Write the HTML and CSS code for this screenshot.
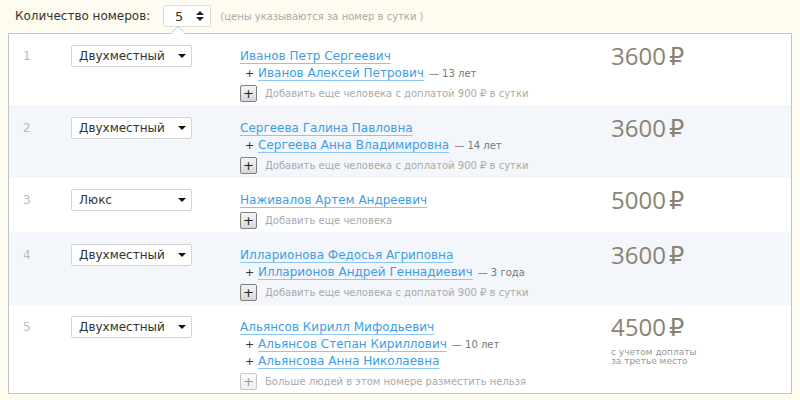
FILE: index.html
```html
<!DOCTYPE html>
<html lang="ru">
<head>
<meta charset="utf-8">
<title>Номера</title>
<link rel="stylesheet" href="styles.css">
</head>
<body>
<div class="page">
  <div class="head">
    <span class="label">Количество номеров:</span>
    <div class="spin"><span class="spin-val">5</span><span class="spin-arrows"><i class="up"></i><i class="down"></i></span></div>
    <span class="note">(цены указываются за номер в сутки )</span>
  </div>
  <div class="box">
    <div class="row">
      <div class="num">1</div>
      <div class="cell-sel"><div class="select"><span>Двухместный</span><i class="caret"></i></div></div>
      <div class="people">
        <div class="main"><a class="link">Иванов Петр Сергеевич</a></div>
        <div class="sub"><span class="plus">+</span><a class="link">Иванов Алексей Петрович</a><span class="age">— 13 лет</span></div>
        <div class="add"><span class="btn">+</span><span class="add-text">Добавить еще человека с доплатой 900 ₽ в сутки</span></div>
      </div>
      <div class="price"><div class="sum">3600<span class="rub">₽</span></div></div>
    </div>
    <div class="row alt">
      <div class="num">2</div>
      <div class="cell-sel"><div class="select"><span>Двухместный</span><i class="caret"></i></div></div>
      <div class="people">
        <div class="main"><a class="link">Сергеева Галина Павловна</a></div>
        <div class="sub"><span class="plus">+</span><a class="link">Сергеева Анна Владимировна</a><span class="age">— 14 лет</span></div>
        <div class="add"><span class="btn">+</span><span class="add-text">Добавить еще человека с доплатой 900 ₽ в сутки</span></div>
      </div>
      <div class="price"><div class="sum">3600<span class="rub">₽</span></div></div>
    </div>
    <div class="row">
      <div class="num">3</div>
      <div class="cell-sel"><div class="select"><span>Люкс</span><i class="caret"></i></div></div>
      <div class="people">
        <div class="main"><a class="link">Наживалов Артем Андреевич</a></div>
        <div class="add"><span class="btn">+</span><span class="add-text">Добавить еще человека</span></div>
      </div>
      <div class="price"><div class="sum">5000<span class="rub">₽</span></div></div>
    </div>
    <div class="row alt">
      <div class="num">4</div>
      <div class="cell-sel"><div class="select"><span>Двухместный</span><i class="caret"></i></div></div>
      <div class="people">
        <div class="main"><a class="link">Илларионова Федосья Агриповна</a></div>
        <div class="sub"><span class="plus">+</span><a class="link">Илларионов Андрей Геннадиевич</a><span class="age">— 3 года</span></div>
        <div class="add"><span class="btn">+</span><span class="add-text">Добавить еще человека с доплатой 900 ₽ в сутки</span></div>
      </div>
      <div class="price"><div class="sum">3600<span class="rub">₽</span></div></div>
    </div>
    <div class="row">
      <div class="num">5</div>
      <div class="cell-sel"><div class="select"><span>Двухместный</span><i class="caret"></i></div></div>
      <div class="people">
        <div class="main"><a class="link">Альянсов Кирилл Мифодьевич</a></div>
        <div class="sub"><span class="plus">+</span><a class="link">Альянсов Степан Кириллович</a><span class="age">— 10 лет</span></div>
        <div class="sub"><span class="plus">+</span><a class="link">Альянсова Анна Николаевна</a></div>
        <div class="add"><span class="btn disabled">+</span><span class="add-text">Больше людей в этом номере разместить нельзя</span></div>
      </div>
      <div class="price"><div class="sum">4500<span class="rub">₽</span></div><div class="extra">с учетом доплаты<br>за третье место</div></div>
    </div>
  </div>
</div>
</body>
</html>
```

FILE: styles.css
```css
html, body {
  margin: 0;
  padding: 0;
  background: #fefbf0;
}
body {
  font-family: "DejaVu Sans", Verdana, sans-serif;
  font-size: 12px;
  color: #333;
}
.page {
  padding: 5px 8px 0 8px;
}
.head {
  display: flex;
  align-items: center;
  height: 22px;
  padding-left: 7px;
}
.label {
  color: #333;
  font-size: 12px;
  margin-right: 13px;
}
.spin {
  box-sizing: border-box;
  width: 48px;
  height: 22px;
  background: #fff;
  border: 1px solid #ddd;
  border-radius: 2px;
  display: flex;
  align-items: center;
  justify-content: flex-end;
  padding-right: 6px;
  gap: 13px;
}
.spin-val {
  font-size: 13px;
  color: #333;
}
.spin-arrows {
  display: flex;
  flex-direction: column;
  gap: 2px;
}
.spin-arrows i {
  display: block;
  width: 0;
  height: 0;
  border-left: 4px solid transparent;
  border-right: 4px solid transparent;
}
.spin-arrows .up { border-bottom: 4px solid #222; }
.spin-arrows .down { border-top: 4px solid #222; }
.note {
  margin-left: 9px;
  font-size: 10px;
  color: #aaa;
}
.box {
  position: relative;
  margin-top: 6px;
  background: #fff;
  border: 1px solid #c4c4c4;
}
.box::before,
.box::after {
  content: "";
  position: absolute;
  left: 161px;
  width: 0;
  height: 0;
  border-left: 8px solid transparent;
  border-right: 8px solid transparent;
}
.box::before {
  top: -8px;
  border-bottom: 8px solid #c4c4c4;
}
.box::after {
  top: -7px;
  border-bottom: 8px solid #fff;
}
.row {
  display: grid;
  grid-template-columns: 48px 169px 371px 1fr;
  padding: 13px 0 3px 14px;
}
.row.alt {
  background: #f3f6fa;
  padding-top: 14px;
  padding-bottom: 4px;
}
.num {
  color: #bbb;
  font-size: 12px;
  line-height: 18px;
}
.select {
  box-sizing: border-box;
  width: 121px;
  height: 22px;
  margin-top: -2px;
  background: #fff;
  border: 1px solid #d4d4d4;
  border-radius: 2px;
  display: flex;
  align-items: center;
  justify-content: space-between;
  padding: 0 5px 0 7px;
  font-size: 12px;
  color: #333;
}
.caret {
  display: block;
  width: 0;
  height: 0;
  border-left: 4px solid transparent;
  border-right: 4px solid transparent;
  border-top: 4px solid #111;
}
.people {
  display: flex;
  flex-direction: column;
}
.main {
  line-height: 18px;
}
.link {
  color: #3d9de6;
  text-decoration: underline;
  text-decoration-color: #8cc6f2;
  text-underline-offset: 3px;
  font-size: 12px;
}
.sub {
  line-height: 16px;
  padding-left: 5px;
  display: flex;
  align-items: baseline;
}
.plus {
  display: inline-block;
  width: 13px;
  font-size: 11px;
  color: #333;
}
.age {
  font-size: 10px;
  color: #777;
  margin-left: 5px;
}
.add {
  display: flex;
  align-items: center;
  height: 18px;
  margin-top: 2px;
}
.btn {
  box-sizing: border-box;
  width: 17px;
  height: 17px;
  border: 1px solid #7f7f7f;
  border-radius: 2px;
  background: linear-gradient(#f4f4f4, #d8d8d8);
  display: flex;
  align-items: center;
  justify-content: center;
  font-size: 13px;
  line-height: 1;
  color: #222;
}
.btn.disabled {
  border-color: #c8c8c8;
  background: linear-gradient(#fafafa, #eeeeee);
  color: #999;
}
.add-text {
  margin-left: 8px;
  font-size: 10px;
  color: #aaa;
}
.price {
  color: #8a8373;
}
.sum {
  font-family: "Open Sans", "DejaVu Sans", sans-serif;
  font-size: 24px;
  line-height: 18px;
}
.rub {
  margin-left: 3px;
}
.extra {
  margin-top: 12px;
  font-size: 9px;
  line-height: 9px;
  color: #999;
}
```
